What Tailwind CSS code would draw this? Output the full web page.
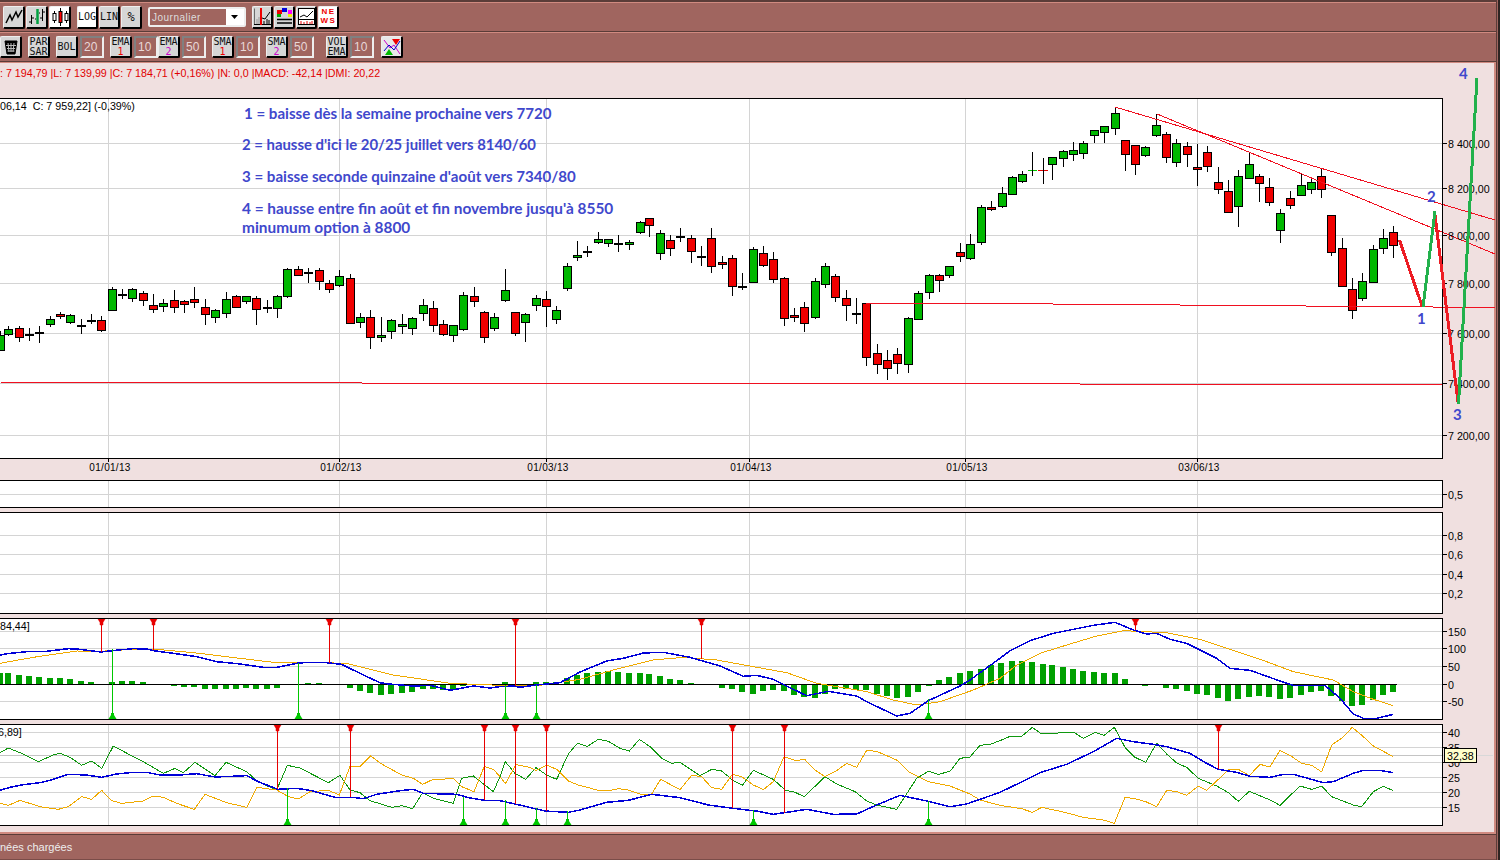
<!doctype html>
<html>
  <head>
    <title>Graphique</title>
    <script src="https://cdn.jsdelivr.net/npm/@tailwindcss/browser@4"></script>
  </head>
  <body class="w-[1500px] h-[860px] overflow-hidden bg-[#a0655f] font-['Liberation_Sans',sans-serif]">
    <div class="h-[860px] pr-[1px] border-r-2 border-[#2e2422]">
      <div class="flex flex-col h-[860px] border-r border-[#5a3c38]">
        <div class="h-[2px] bg-[#5a3c38]"></div>

        <!-- Toolbars -->
        <div class="h-[30px] border-t border-t-[#d08a80] border-b border-b-[#5a3c38] flex items-center pl-[3px]">
          <div class="flex gap-[1px]">
            <button class="w-[22px] h-[23px] rounded-[2px] bg-[#d6d6d6] border border-black border-b-2 border-r-2 border-t-[#eee] border-l-[#eee] flex items-center justify-center">
              <svg width="18" height="16" fill="none" stroke="black" stroke-width="1.5"><path d="M1 14 5 6 7 11 11 3 13 8 17 1" /></svg>
            </button>
            <button class="w-[22px] h-[23px] rounded-[2px] bg-[#d6d6d6] border border-black border-b-2 border-r-2 border-t-[#eee] border-l-[#eee] flex items-center justify-center">
              <svg width="18" height="18" fill="none" stroke="black"><path d="M3.500 7v9M1 14h2M4 10h2M14.500 1v12M12 10h2M15 4h2M7 11h1M11 5h1" /><path d="M9.500 1v15" stroke="#00a040" stroke-width="2.500" /></svg>
            </button>
            <button class="w-[22px] h-[23px] rounded-[2px] bg-white border border-black border-b-2 border-r-2 border-t-[#eee] border-l-[#eee] flex items-center justify-center">
              <svg width="18" height="18" stroke="black"><path d="M3.500 3v12M9.500 0v18M15.500 3v12" /><rect x="2" y="5.500" width="3" height="7" fill="white" /><rect x="8" y="3.500" width="3" height="11" fill="#f00" /><rect x="14" y="5.500" width="3" height="7" fill="white" /></svg>
            </button>
          </div>
          <div class="flex gap-[1px] ml-[6px] text-[10px] font-['DejaVu_Sans_Mono',monospace] text-[#111]">
            <button class="w-[21px] h-[23px] rounded-[2px] bg-white border border-black border-b-2 border-r-2 border-t-[#eee] border-l-[#eee]">LOG</button>
            <button class="w-[21px] h-[23px] rounded-[2px] bg-[#d6d6d6] border border-black border-b-2 border-r-2 border-t-[#eee] border-l-[#eee]">LIN</button>
            <button class="w-[21px] h-[23px] rounded-[2px] bg-[#d6d6d6] border border-black border-b-2 border-r-2 border-t-[#eee] border-l-[#eee] text-[12px]">%</button>
          </div>
          <div class="w-[98px] h-[20px] ml-[6px] bg-[#a0655f] border-2 border-[#eee] rounded-[2px] flex items-center justify-between">
            <span class="pl-[2px] text-[10px] tracking-[0.5px] text-[#ddd]">Journalier</span>
            <span class="w-[18px] h-[16px] bg-white flex items-center justify-center"><svg width="8" height="4"><path d="M0 0h7L3.500 4z" /></svg></span>
          </div>
          <div class="flex gap-[1px] ml-[6px]">
            <button class="w-[21px] h-[23px] rounded-[2px] bg-[#d6d6d6] border border-black border-b-2 border-r-2 border-t-[#eee] border-l-[#eee] flex items-center justify-center">
              <svg width="17" height="18" fill="none"><path d="M0 16.500h17M0 .5v16" stroke="black" /><path d="M3 16v-5M5 16v-7" stroke="#999" /><path d="M7 0v17" stroke="#e00" stroke-width="2" /><path d="M8 10l3 1 5-7M10 16v-3M13 16v-5M15 16v-4" stroke="black" /></svg>
            </button>
            <button class="w-[21px] h-[23px] rounded-[2px] bg-[#d6d6d6] border border-black border-b-2 border-r-2 border-t-[#eee] border-l-[#eee] flex items-center justify-center">
              <svg width="17" height="17"><rect x="1" y="2" width="5" height="4" fill="#e00" /><rect x="6" y="0" width="5" height="4" fill="#00d" /><rect x="12" y="2" width="4" height="4" fill="#f0f" /><rect x="1" y="6" width="4" height="3" fill="#0a0" /><rect x="12" y="6" width="4" height="3" fill="#ee0" /><path d="M1 11.500h15M1 15h15" stroke="black" stroke-width="1.500" /></svg>
            </button>
            <button class="w-[21px] h-[23px] rounded-[2px] bg-[#d6d6d6] border border-black border-b-2 border-r-2 border-t-[#eee] border-l-[#eee] flex items-center justify-center">
              <svg width="17" height="17" fill="none"><rect x=".5" y=".5" width="16" height="16" fill="white" stroke="black" /><path d="M2 9l4-2 3 2 6-6" stroke="black" /><path d="M1 11.500h15" stroke="black" /><path d="M3 16v-3M6 16v-2M9 16v-3M12 16v-2M14 16v-3" stroke="#e00" /></svg>
            </button>
            <button class="w-[21px] h-[23px] rounded-[2px] bg-white border border-black border-b-2 border-r-2 border-t-[#eee] border-l-[#eee] flex flex-col items-center justify-center gap-[1px] text-[8px] leading-[8px] tracking-[1.5px] text-[#e00] font-bold">
              <span class="pl-[1px]">NE</span><span class="pl-[1px]">WS</span>
            </button>
          </div>
        </div>

        <div class="h-[30px] border-t border-t-[#d08a80] border-b border-b-[#5a3c38] flex items-center text-[10px] leading-[10px] font-['DejaVu_Sans_Mono',monospace] text-[#111]">
          <button class="w-[22px] h-[22px] rounded-[2px] bg-[#d6d6d6] border border-black border-b-2 border-r-2 border-t-[#eee] border-l-[#eee] flex items-center justify-center">
            <svg width="14" height="16" stroke="black" fill="black"><path d="M1 2h12l-2 13H3z" /><path d="M4 4l1 9M7 4v9M10 4l-1 9M2 6.500h10M3 9.500h8M3.500 12h7" stroke="#bbb" fill="none" /></svg>
          </button>
          <button class="w-[22px] h-[22px] ml-[6px] rounded-[2px] bg-[#d6d6d6] border border-black border-b-2 border-r-2 border-t-[#eee] border-l-[#eee]">PAR<br />SAR</button>
          <button class="w-[22px] h-[22px] ml-[6px] rounded-[2px] bg-[#d6d6d6] border border-black border-b-2 border-r-2 border-t-[#eee] border-l-[#eee]">BOL</button>
          <div class="w-[24px] h-[22px] ml-[2px] pl-[2px] border-2 border-[#808080] border-r-[#eee] border-b-[#eee] flex items-center text-[12px] text-[#e8d8d8] font-['Liberation_Sans',sans-serif]">20</div>
          <button class="w-[22px] h-[22px] ml-[6px] rounded-[2px] bg-[#d6d6d6] border border-black border-b-2 border-r-2 border-t-[#eee] border-l-[#eee]">EMA<br /><span class="text-[#e00]">1</span></button>
          <div class="w-[24px] h-[22px] ml-[2px] pl-[2px] border-2 border-[#808080] border-r-[#eee] border-b-[#eee] flex items-center text-[12px] text-[#e8d8d8] font-['Liberation_Sans',sans-serif]">10</div>
          <button class="w-[22px] h-[22px] rounded-[2px] bg-[#d6d6d6] border border-black border-b-2 border-r-2 border-t-[#eee] border-l-[#eee]">EMA<br /><span class="text-[#c0c]">2</span></button>
          <div class="w-[24px] h-[22px] ml-[2px] pl-[2px] border-2 border-[#808080] border-r-[#eee] border-b-[#eee] flex items-center text-[12px] text-[#e8d8d8] font-['Liberation_Sans',sans-serif]">50</div>
          <button class="w-[22px] h-[22px] ml-[6px] rounded-[2px] bg-[#d6d6d6] border border-black border-b-2 border-r-2 border-t-[#eee] border-l-[#eee]">SMA<br /><span class="text-[#e00]">1</span></button>
          <div class="w-[24px] h-[22px] ml-[2px] pl-[2px] border-2 border-[#808080] border-r-[#eee] border-b-[#eee] flex items-center text-[12px] text-[#e8d8d8] font-['Liberation_Sans',sans-serif]">10</div>
          <button class="w-[22px] h-[22px] ml-[6px] rounded-[2px] bg-[#d6d6d6] border border-black border-b-2 border-r-2 border-t-[#eee] border-l-[#eee]">SMA<br /><span class="text-[#c0c]">2</span></button>
          <div class="w-[24px] h-[22px] ml-[2px] pl-[2px] border-2 border-[#808080] border-r-[#eee] border-b-[#eee] flex items-center text-[12px] text-[#e8d8d8] font-['Liberation_Sans',sans-serif]">50</div>
          <button class="w-[22px] h-[22px] ml-[12px] rounded-[2px] bg-[#d6d6d6] border border-black border-b-2 border-r-2 border-t-[#eee] border-l-[#eee]">VOL<br />EMA</button>
          <div class="w-[24px] h-[22px] ml-[2px] pl-[2px] border-2 border-[#808080] border-r-[#eee] border-b-[#eee] flex items-center text-[12px] text-[#e8d8d8] font-['Liberation_Sans',sans-serif]">10</div>
          <button class="w-[22px] h-[22px] ml-[7px] rounded-[2px] bg-[#e8e8e8] border border-black border-b-2 border-r-2 border-t-[#eee] border-l-[#eee] flex items-center justify-center">
            <svg width="18" height="18" fill="none"><path d="M1 2l6 8 4-3 6 9" stroke="#c0c" /><path d="M1 13l5-6 5 5 6-9" stroke="#00c" /><path d="M9 1h8l-4 6z" fill="#e00" /><path d="M2 17h8l-4-6z" fill="#0b0" /></svg>
          </button>
        </div>

        <!-- Chart area -->
        <div class="flex-1 bg-[#f0e0e0] border-t border-t-[#d08a80] border-r-2 border-r-[#d08a80] border-b-2 border-b-[#d08a80]">
          <div class="h-[22px] pt-[3px] text-[10.7px] leading-[14px] text-[#e00000] whitespace-pre">: 7 194,79 |L: 7 139,99 |C: 7 184,71 (+0,16%) |N: 0,0 |MACD: -42,14 |DMI: 20,22</div>
          <svg id="chart" class="overflow-visible" width="1494" height="745" viewBox="0 85 1494 745"></svg>
        </div>

        <!-- Status bar -->
        <div class="h-[26px] border-t border-t-[#5a3c38] border-b border-b-[#7a4c48] flex items-center text-[11px] text-[#eee]">nées chargées</div>
      </div>
    </div>

    <script>
      const GRID = "#d4d4d4";
      const PANELS = [
        { top: 98.5, bottom: 458.5 },
        { top: 480.5, bottom: 507.5 },
        { top: 512.5, bottom: 613.5 },
        { top: 618.5, bottom: 719.5 },
        { top: 724.5, bottom: 825.5 },
      ];
      const VLINES = [108.5, 339.5, 546.5, 749.5, 965.5, 1197.5];
      const HLINES = [
        [143.5, "8 400,00"], [188.5, "8 200,00"], [235.5, "8 000,00"], [283.5, "7 800,00"],
        [333.5, "7 600,00"], [383.5, "7 400,00"], [435.5, "7 200,00"],
        [494.5, "0,5"], [535.5, "0,8"], [554.5, "0,6"], [574.5, "0,4"], [593.5, "0,2"],
        [631.5, "150"], [648.5, "100"], [666.5, "50"], [684.5, "0"], [701.5, "-50"],
        [732.5, "40"], [747.5, "35"], [762.5, "30"], [777.5, "25"], [792.5, "20"], [807.5, "15"],
      ];
      const DATES = [[108, "01/01/13"], [339, "01/02/13"], [546, "01/03/13"], [749, "01/04/13"], [965, "01/05/13"], [1197, "03/06/13"]];

      // x, wick top, wick bottom, body top, body bottom, colour (g, r, d = doji)
      const CANDLES = [
        [0,331,350,335,350,"g"],[8,326,336,329,334,"g"],[19,326,342,328,337,"r"],[29,328,341,334,334,"d"],[39,326,343,332,332,"d"],
        [50,316,327,319,324,"g"],[60,312,319,314,316,"r"],[70,314,324,315,322,"g"],[81,319,334,325,325,"d"],[91,314,324,320,320,"d"],
        [101,316,332,320,330,"r"],[112,287,310,289,310,"g"],[122,289,299,294,294,"d"],[132,288,302,289,298,"g"],[143,291,306,293,300,"r"],
        [153,294,313,305,309,"r"],[163,299,312,303,306,"g"],[174,290,313,300,307,"r"],[184,300,313,301,304,"r"],[194,287,308,299,302,"r"],
        [205,299,325,307,314,"r"],[215,309,323,310,317,"g"],[226,292,318,299,313,"g"],[236,295,307,296,307,"r"],[246,296,304,296,301,"g"],
        [256,296,325,298,309,"r"],[267,300,313,307,307,"d"],[277,295,318,296,308,"g"],[287,268,298,269,296,"g"],[298,266,276,269,275,"r"],
        [308,268,283,272,272,"d"],[319,268,290,270,281,"r"],[329,280,293,283,289,"r"],[339,270,287,276,285,"g"],[350,274,323,278,323,"r"],
        [360,313,328,317,322,"g"],[370,310,349,317,337,"r"],[381,317,342,335,337,"g"],[391,319,339,320,331,"g"],[402,314,334,324,326,"g"],
        [412,317,335,318,328,"g"],[423,299,321,305,313,"g"],[433,301,332,308,325,"r"],[443,320,336,324,334,"r"],[453,325,342,325,335,"g"],
        [463,292,331,295,329,"g"],[474,287,307,296,301,"r"],[484,311,343,312,337,"r"],[494,313,331,317,328,"g"],[505,269,302,290,300,"g"],
        [515,312,336,312,333,"r"],[525,313,342,314,322,"g"],[536,295,311,298,305,"g"],[546,291,327,299,306,"r"],[556,306,324,310,319,"g"],
        [567,263,291,266,288,"g"],[577,241,261,255,257,"g"],[587,246,257,251,251,"d"],[598,232,244,239,242,"g"],[608,239,247,239,243,"g"],
        [618,235,252,243,243,"d"],[629,240,250,242,244,"g"],[640,221,234,222,232,"g"],[649,218,237,218,225,"r"],[660,230,260,233,253,"g"],
        [670,235,256,240,248,"r"],[680,228,242,236,236,"d"],[691,235,263,238,251,"r"],[701,246,266,256,256,"d"],[711,228,273,238,266,"r"],
        [722,256,269,262,264,"r"],[732,255,296,258,286,"r"],[742,273,290,286,286,"d"],[753,247,282,249,282,"g"],[763,246,267,253,265,"r"],
        [773,252,283,259,279,"r"],[784,277,326,278,318,"r"],[794,308,322,315,317,"r"],[804,302,332,307,323,"r"],[815,278,319,281,317,"g"],
        [825,263,288,266,284,"g"],[835,274,302,276,297,"r"],[846,290,321,298,305,"r"],[856,298,324,313,313,"d"],[866,303,366,303,357,"r"],
        [877,344,374,353,364,"r"],[887,350,380,360,368,"r"],[897,348,374,354,363,"r"],[908,317,373,318,364,"g"],[918,291,319,293,319,"g"],
        [929,274,299,275,292,"g"],[939,274,292,275,280,"r"],[949,266,278,266,275,"g"],[960,243,262,252,256,"r"],[970,234,260,244,258,"g"],
        [981,205,245,207,242,"g"],[991,201,211,207,209,"r"],[1002,187,208,193,206,"g"],[1012,176,195,177,194,"g"],[1022,171,183,174,181,"g"],
        [1052,157,180,157,164,"g"],[1063,150,167,151,158,"g"],[1073,142,161,150,154,"g"],[1083,141,159,143,153,"g"],[1094,130,143,130,135,"g"],
        [1104,126,143,126,132,"g"],[1115,107,135,113,128,"g"],[1125,140,171,140,154,"r"],[1135,145,175,145,164,"r"],[1145,146,157,147,155,"g"],
        [1156,114,137,125,135,"g"],[1166,132,163,134,157,"r"],[1176,139,167,143,162,"g"],[1187,142,167,146,154,"r"],[1197,144,186,167,169,"r"],
        [1207,146,172,152,166,"r"],[1218,167,194,182,189,"r"],[1228,180,212,191,212,"r"],[1238,170,227,176,206,"g"],[1249,152,178,164,178,"g"],
        [1259,174,202,176,183,"r"],[1269,178,206,187,202,"r"],[1280,209,243,213,230,"g"],[1290,191,209,198,205,"r"],[1301,173,196,185,195,"g"],
        [1311,179,194,182,189,"g"],[1321,168,198,176,189,"r"],[1331,215,256,215,252,"r"],[1342,238,286,248,286,"r"],[1352,278,319,289,310,"r"],
        [1362,273,301,281,298,"g"],[1373,245,283,249,282,"g"],[1383,229,254,238,248,"g"],[1393,226,258,232,245,"r"],
      ];

      // x, y of the bar end, baseline is the zero line
      const HIST = [[0,673],[8,673],[19,675],[29,676],[39,677],[50,678],[60,678],[70,679],[81,681],[91,682],[112,682],[122,681],[132,681],[143,682],
        [174,686],[184,687],[194,687],[205,689],[215,689],[226,689],[236,689],[246,688],[256,689],[267,689],[277,688],[308,683],[319,683],
        [350,688],[360,691],[370,693],[381,695],[391,694],[402,693],[412,692],[423,689],[433,689],[443,690],[453,689],[463,686],[505,682],
        [536,682],[546,682],[556,682],[567,678],[577,675],[587,673],[598,672],[608,671],[618,672],[629,673],[640,673],[649,674],[660,676],
        [670,679],[680,680],[691,683],[722,688],[732,689],[742,692],[753,694],[763,691],[773,690],[784,691],[794,695],[804,697],[815,698],
        [825,694],[835,689],[846,689],[856,690],[866,690],[877,694],[887,696],[897,698],[908,697],[918,692],[929,686],[939,680],[949,677],
        [960,673],[970,671],[981,669],[991,665],[1001,663],[1012,661],[1022,661],[1032,662],[1043,664],[1052,665],[1063,667],[1073,669],
        [1083,671],[1094,672],[1104,673],[1115,673],[1125,679],[1145,686],[1166,688],[1176,689],[1187,691],[1197,694],[1207,695],[1218,698],
        [1228,701],[1238,699],[1249,697],[1259,696],[1269,697],[1280,699],[1290,698],[1301,695],[1311,692],[1321,691],[1331,696],[1342,701],
        [1352,706],[1362,705],[1373,700],[1383,695],[1393,692]];

      // Lines as zoom readings: [origin x, flat list of x,y at 3x]
      const MACD_BLUE = [
        [0,[0,135,30,130,80,125,140,124,205,116,240,118,304,126,345,121,400,116,440,117,460,122,520,130,590,140,650,155,720,162,790,172,830,172,890,160,920,157,980,158,1025,163,1090,195,1140,218,1165,222,1240,228,1290,226,1350,241,1420,228,1470,234]],
        [500,[0,230,40,228,60,232,100,226,180,218,240,186,320,153,370,145,430,129,490,127,570,142,660,168,730,199,770,196,820,208,880,238,920,257,985,244,1070,258,1100,275,1190,318,1230,310,1285,272,1380,228,1410,210]],
        [1000,[0,145,30,122,90,92,160,70,280,46,345,37,400,60,440,72,470,70,510,88,560,100,650,145,690,175,750,181,860,220,880,226,975,226,1020,265,1060,312,1090,325,1130,325,1180,313]],
      ];
      const MACD_ORANGE = [
        [0,[0,160,100,142,230,123,300,124,400,118,470,118,600,130,720,145,820,157,920,157,1040,160,1180,195,1350,220]],
        [500,[0,226,120,226,240,208,340,180,460,150,550,142,650,150,760,170,860,188,950,220,1100,245,1180,270,1250,285,1320,275,1420,240]],
        [1000,[0,205,50,165,120,130,200,105,290,78,370,62,500,68,600,88,680,115,800,155,880,185,1000,210,1060,245,1120,268,1180,287]],
      ];
      const DMI_GREEN = [
        [0,[0,428,25,414,70,432,115,455,160,435,180,430,210,442,245,466,275,453,305,475,340,408,385,432,430,455,490,490,525,475,550,488,585,457,645,497,678,457,740,485,775,516,830,540,862,466,900,474,985,518,1020,496,1050,540,1080,548,1110,572,1175,592,1205,587,1238,596,1268,548,1300,565,1360,580,1385,505,1420,498,1480,545]],
        [500,[0,500,16,455,45,490,77,508,108,473,140,495,170,508,205,432,232,400,262,409,295,388,325,394,360,415,388,423,418,388,450,410,485,445,515,460,540,457,600,497,635,478,665,483,700,512,727,526,760,481,820,508,855,540,885,547,913,560,975,500,1010,522,1065,545,1100,573,1130,585,1190,598,1250,505,1285,484,1315,493,1350,484,1380,445,1410,441,1440,406,1470,403]],
        [1000,[0,392,30,379,65,379,97,352,125,372,160,370,220,366,250,385,285,367,312,376,343,352,375,412,405,442,437,457,470,400,500,432,530,459,560,472,595,505,650,528,685,548,715,574,748,544,810,570,840,586,900,528,935,538,965,528,995,560,1060,585,1085,590,1120,545,1150,529,1180,542]],
      ];
      const DMI_ORANGE = [
        [0,[0,580,25,586,60,571,120,590,175,598,205,590,245,560,275,568,305,541,335,572,365,580,430,573,460,558,490,562,530,580,583,598,615,553,680,578,740,592,770,532,830,540,865,560,895,567,930,545,985,541,1018,555,1050,469,1080,469,1112,438,1145,462,1205,495,1240,505,1268,523,1295,510,1360,505,1385,530,1422,545,1453,469,1480,478]],
        [500,[0,500,16,521,48,464,90,472,108,482,140,465,170,478,205,513,235,525,295,541,330,541,355,536,385,540,420,552,455,552,482,508,540,539,575,496,605,500,635,533,665,538,697,493,725,500,760,525,790,539,820,515,852,440,885,451,915,449,945,480,975,500,1010,482,1040,460,1070,472,1100,421,1130,424,1190,450,1230,488,1285,515,1350,528,1410,552,1440,570]],
        [1000,[0,586,65,596,97,607,125,592,190,606,250,622,310,630,343,640,375,562,405,566,437,575,470,590,500,541,530,545,560,556,595,528,620,541,685,480,715,478,748,497,780,463,810,471,840,421,870,436,905,460,935,466,965,486,995,405,1025,385,1057,352,1090,380,1120,408,1180,440]],
      ];
      const DMI_BLUE = [
        [0,[0,541,30,532,70,524,120,518,160,508,205,493,260,495,305,502,350,492,400,487,440,487,480,495,540,495,590,491,645,501,740,497,775,515,833,538,890,535,935,542,1005,562,1060,562,1090,566,1130,553,1200,542,1240,538,1270,550,1370,553,1410,564,1453,571]],
        [500,[0,572,50,583,135,603,205,607,240,600,320,577,385,571,455,553,540,563,625,585,700,595,775,604,820,613,920,598,1000,613,1070,612,1130,585,1200,556,1285,574,1350,590,1400,582]],
        [1000,[0,547,60,518,120,488,200,463,280,425,350,385,400,395,460,403,500,410,570,430,620,460,655,478,710,487,750,499,810,502,850,493,880,493,970,518,1000,515,1060,490,1090,481,1140,481,1180,488]],
      ];

      // Crossover markers: x, end of the stem
      const MARKS = {
        macdDown: [[101,652],[153,650],[329,663],[515,686],[701,659],[1135,630]],
        macdUp: [[112,649],[298,663],[505,685],[536,685],[928,699]],
        dmiDown: [[277,789],[350,797],[484,800],[515,804],[546,811],[732,808],[784,813],[1218,769]],
        dmiUp: [[287,788],[463,797],[505,800],[536,808],[567,811],[753,810],[928,801]],
      };

      function polyline(segments, color, width) {
        const points = segments
          .map(([ox, list]) => {
            const out = [];
            for (let i = 0; i < list.length; i += 2) out.push(`${ox + list[i] / 3},${610 + list[i + 1] / 3}`);
            return out.join(" ");
          })
          .join(" ");
        return `<polyline points="${points}" fill="none" stroke="${color}" stroke-width="${width}" shape-rendering="crispEdges" />`;
      }

      function line(x1, y1, x2, y2, color, width = 1) {
        return `<line x1="${x1}" y1="${y1}" x2="${x2}" y2="${y2}" stroke="${color}" stroke-width="${width}" shape-rendering="crispEdges" />`;
      }

      function drawCandle([x, wt, wb, bt, bb, kind]) {
        const cx = x + 0.5;
        let out = line(cx, wt, cx, wb, "black");
        if (kind === "d") {
          out += `<rect x="${x - 4}" y="${bt}" width="9" height="2" fill="black" />`;
        } else {
          const fill = kind === "g" ? "#00b800" : "#f00000";
          out += `<rect x="${x - 3.5}" y="${bt + 0.5}" width="8" height="${bb - bt}" fill="${fill}" stroke="black" stroke-width="1" shape-rendering="crispEdges" />`;
        }
        return out;
      }

      function marker(x, top, stemEnd) {
        return line(x + 0.5, top, x + 0.5, stemEnd, "#e80000") +
          `<path d="M${x - 3} ${top}h7l-2 3.500v2.500h-3v-2.500z" fill="#e80000" stroke="#e80000" stroke-width=".5" />`;
      }

      function markerUp(x, stemEnd, bottom) {
        return line(x + 0.5, stemEnd, x + 0.5, bottom, "#00c800") +
          `<path d="M${x - 1} ${bottom - 6}h3v2l2.500 4h-8l2.500-4z" fill="#00c800" />`;
      }

      function build() {
        let svg = "";

        // Panel backgrounds
        PANELS.forEach((p) => {
          svg += `<rect x="-2" y="${p.top}" width="1445" height="${p.bottom - p.top}" fill="white" />`;
        });

        // Grid
        HLINES.forEach(([y]) => { svg += line(0, y, 1443, y, GRID); });
        VLINES.forEach((x) => {
          PANELS.forEach((p) => { svg += line(x, p.top, x, p.bottom, GRID); });
        });
        svg += line(0, 755.5, 1443, 755.5, "#c4c4c4");
        svg += line(1443, 755.5, 1493, 755.5, "#d8d8d8");

        // Candles
        svg += CANDLES.map(drawCandle).join("");
        svg += line(1028, 170.5, 1037, 170.5, "#00c800") + line(1038, 170.5, 1048, 170.5, "#e00000");
        svg += line(1032.5, 152, 1032.5, 176, "black") + line(1043.5, 158, 1043.5, 184, "black");

        // Support and resistance lines
        const RED = "#f01020";
        svg += line(1, 382.5, 362, 382.5, RED) + line(362, 383.5, 1080, 383.5, RED) + line(1080, 384.5, 1443, 384.5, RED);
        svg += line(866, 303.5, 1053, 303.5, RED) + line(1053, 304.5, 1180, 304.5, RED) + line(1180, 305.5, 1306, 305.5, RED) + line(1306, 306.5, 1433, 306.5, RED) + line(1433, 307.5, 1495, 307.5, RED);
        svg += line(1115, 107, 1495, 220, RED) + line(1157, 114, 1495, 254, RED);

        // MACD histogram
        svg += `<g shape-rendering="crispEdges">` + HIST.map(([x, y]) => {
          const top = Math.min(y, 684);
          return `<rect x="${x - 3}" y="${top}" width="6" height="${Math.abs(y - 684)}" fill="#00a000" />`;
        }).join("") + `</g>`;
        svg += line(0, 684.5, 1397, 684.5, "black");

        // Indicator lines
        svg += polyline(MACD_ORANGE, "#f0aa00", 1);
        svg += polyline(MACD_BLUE, "#0000d8", 1.5);
        svg += polyline(DMI_GREEN, "#109810", 1);
        svg += polyline(DMI_ORANGE, "#f0aa00", 1);
        svg += polyline(DMI_BLUE, "#0000d8", 1.5);

        // Markers
        MARKS.macdDown.forEach(([x, y]) => { svg += marker(x, 619, y); });
        MARKS.macdUp.forEach(([x, y]) => { svg += markerUp(x, y, 719); });
        MARKS.dmiDown.forEach(([x, y]) => { svg += marker(x, 725, y); });
        MARKS.dmiUp.forEach(([x, y]) => { svg += markerUp(x, y, 825); });

        // Panel frames
        PANELS.forEach((p) => {
          svg += line(0, p.top, 1443, p.top, "black") + line(0, p.bottom, 1443, p.bottom, "black") + line(1442.5, p.top, 1442.5, p.bottom, "black");
        });

        // Axis ticks and labels
        HLINES.forEach(([y, label]) => {
          svg += line(1443, y, 1447, y, "black");
          svg += `<text x="1448" y="${y + 4}" font-size="10.7" fill="black">${label}</text>`;
        });
        DATES.forEach(([x, label]) => {
          svg += line(x + 0.5, 458.5, x + 0.5, 462, "black");
          svg += `<text x="${x + 2}" y="471" font-size="10" fill="black" text-anchor="middle" letter-spacing="0.3">${label}</text>`;
        });

        // Clipped legends at the left edge
        svg += `<text x="0" y="110" font-size="10.7" xml:space="preserve">06,14  C: 7 959,22] (-0,39%)</text>`;
        svg += `<text x="0" y="630" font-size="10.7">84,44]</text>`;
        svg += `<text x="-2" y="736" font-size="10.7">6,89]</text>`;

        // Hand drawn forecast
        svg += `<g fill="none" stroke-width="3" shape-rendering="crispEdges">
          <path d="M1399.5 240 1422 306" stroke="#ed1c24" />
          <path d="M1434.5 211 1458 402" stroke="#ed1c24" />
          <path d="M1423 307 1435 211" stroke="#22b14c" />
          <path d="M1458.5 404 1477 78" stroke="#22b14c" />
        </g>`;

        // Tooltip
        svg += `<rect x="1444.5" y="748.5" width="32" height="14" fill="#ffffcc" stroke="black" shape-rendering="crispEdges" />`;
        svg += `<text x="1447" y="759.5" font-size="10.7">32,38</text>`;

        // Annotations
        [
          [244, 119, 15.1, "1 = baisse dès la semaine prochaine vers 7720"],
          [242, 150, 14.9, "2 = hausse d'ici le 20/25 juillet vers 8140/60"],
          [242, 182, 15.1, "3 = baisse seconde quinzaine d'août vers 7340/80"],
          [242, 214, 15.4, "4 = hausse entre fin août et fin novembre jusqu'à 8550"],
          [242, 233, 15.4, "minumum option à 8800"],
          [1417, 324, 15, "1"],
          [1427, 202, 15, "2"],
          [1453, 420, 15, "3"],
          [1459, 79, 15, "4"],
        ].forEach(([x, y, size, t]) => {
          svg += `<text x="${x}" y="${y}" font-family="Lato" font-weight="700" font-size="${size}" fill="#3f48cc">${t}</text>`;
        });

        document.getElementById("chart").innerHTML = svg;
      }

      build();
    </script>
  </body>
</html>
